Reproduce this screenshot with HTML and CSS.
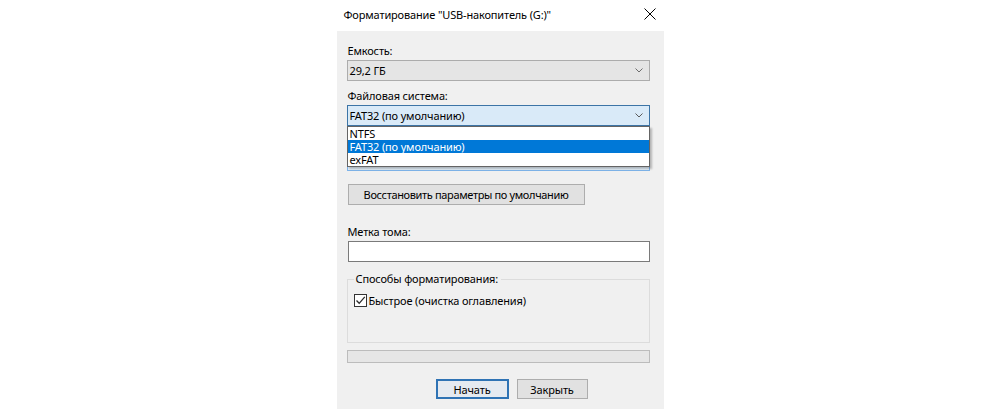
FILE: index.html
```html
<!DOCTYPE html>
<html lang="ru">
<head>
<meta charset="utf-8">
<title>Форматирование</title>
<link rel="stylesheet" href="styles.css">
</head>
<body>
<div class="dialog">
  <div class="titlebar">
    <span class="title">Форматирование "USB-накопитель (G:)"</span>
    <svg class="close" width="12" height="12" viewBox="0 0 12 12"><path d="M0.5 0.5 L11.5 11.5 M11.5 0.5 L0.5 11.5" stroke="#000" stroke-width="1" fill="none"/></svg>
  </div>
  <div class="content">
    <div class="field">
      <div class="label">Емкость:</div>
      <div class="combo combo-plain">
        <span>29,2 ГБ</span>
        <svg class="chev" width="8" height="5" viewBox="0 0 8 5"><path d="M0.5 0.5 L4 4 L7.5 0.5" stroke="#6d6d6d" stroke-width="1" fill="none"/></svg>
      </div>
    </div>
    <div class="field">
      <div class="label">Файловая система:</div>
      <div class="combo-wrap">
        <div class="combo combo-open">
          <span>FAT32 (по умолчанию)</span>
          <svg class="chev" width="8" height="5" viewBox="0 0 8 5"><path d="M0.5 0.5 L4 4 L7.5 0.5" stroke="#5a5a5a" stroke-width="1" fill="none"/></svg>
        </div>
        <ul class="dropdown">
          <li>NTFS</li>
          <li class="sel">FAT32 (по умолчанию)</li>
          <li>exFAT</li>
        </ul>
      </div>
    </div>
    <div class="field">
      <div class="label"></div>
      <div class="combo combo-under"></div>
    </div>
    <button class="btn btn-restore">Восстановить параметры по умолчанию</button>
    <div class="field field-vol">
      <div class="label">Метка тома:</div>
      <div class="textbox"></div>
    </div>
    <fieldset class="group">
      <legend>Способы форматирования:</legend>
      <div class="check-row">
        <span class="checkbox"><svg width="11" height="11" viewBox="0 0 11 11"><path d="M1.5 5.5 L4.2 8.3 L9.8 1.8" stroke="#2b2b2b" stroke-width="1.3" fill="none"/></svg></span>
        <span>Быстрое (очистка оглавления)</span>
      </div>
    </fieldset>
    <div class="progress"></div>
    <div class="actions">
      <button class="btn btn-default">Начать</button>
      <button class="btn btn-close">Закрыть</button>
    </div>
  </div>
</div>
</body>
</html>
```
FILE: styles.css
```css
html, body {
  margin: 0;
  padding: 0;
  background: #ffffff;
  height: 409px;
  overflow: hidden;
}
body {
  font-family: "Noto Sans", "Open Sans", sans-serif;
  font-size: 11px;
  letter-spacing: -0.15px;
  color: #000;
}
.dialog {
  width: 327px;
  margin: 0 auto;
  height: 409px;
  display: flex;
  flex-direction: column;
}
.titlebar {
  height: 31px;
  display: flex;
  align-items: center;
  justify-content: space-between;
  padding: 0 8px 2px 7px;
  box-sizing: border-box;
  background: #fff;
}
.title {
  font-size: 11px;
}
.close {
  margin-bottom: 2px;
}
.content {
  flex: 1;
  background: #f0f0f0;
  padding: 12px 14px 0 10px;
  display: flex;
  flex-direction: column;
  align-items: stretch;
}
.field {
  display: flex;
  flex-direction: column;
  margin-bottom: 7px;
}
.label {
  line-height: 16px;
  height: 16px;
  margin-bottom: 1px;
  padding-left: 1px;
}
.combo {
  height: 21px;
  box-sizing: border-box;
  display: flex;
  align-items: center;
  justify-content: space-between;
  padding: 0 5px 0 2px;
}
.combo-plain {
  background: #e5e5e5;
  border: 1px solid #acacac;
}
.combo-open {
  background: #d9eaf8;
  border: 1px solid #3c74a6;
}
.combo-under {
  border: 1px solid #7eb4ea;
  background: #e5f1fb;
}
.chev {
  margin-right: 1px;
}
.combo-wrap {
  position: relative;
}
.dropdown {
  position: absolute;
  left: 0;
  right: 0;
  top: 100%;
  margin: 0;
  padding: 0;
  list-style: none;
  background: #fff;
  border: 1px solid #646464;
  box-shadow: 2px 2px 2px rgba(0, 0, 0, 0.25);
  z-index: 5;
}
.dropdown li {
  height: 13px;
  line-height: 13px;
  padding-left: 2px;
}
.dropdown li.sel {
  background: #0078d7;
  color: #fff;
}
.btn {
  font-family: inherit;
  font-size: 11px;
  letter-spacing: inherit;
  color: #000;
  background: #e1e1e1;
  border: 1px solid #adadad;
  padding: 0;
  margin: 0;
  box-sizing: border-box;
}
.btn-restore {
  align-self: flex-start;
  width: 237px;
  height: 21px;
  margin: 6px 0 0 1px;
  letter-spacing: -0.35px;
}
.field-vol {
  margin-top: 19px;
  margin-bottom: 0;
}
.textbox {
  height: 21px;
  box-sizing: border-box;
  margin-left: 1px;
  background: #fff;
  border: 1px solid #7a7a7a;
}
.group {
  margin: 9px 0 0 0;
  padding: 0 6px;
  height: 72px;
  box-sizing: border-box;
  border: 1px solid #dcdcdc;
  min-width: 0;
}
.group legend {
  padding: 0 3px 0 2px;
  margin-left: 0;
  line-height: 16px;
}
.check-row {
  display: flex;
  align-items: center;
  gap: 2px;
  margin-top: 6px;
  height: 15px;
}
.checkbox {
  width: 13px;
  height: 13px;
  box-sizing: border-box;
  border: 1px solid #333;
  background: #fff;
  display: flex;
  align-items: center;
  justify-content: center;
}
.progress {
  margin-top: 7px;
  height: 13px;
  box-sizing: border-box;
  background: #e6e6e6;
  border: 1px solid #bcbcbc;
}
.actions {
  display: flex;
  gap: 8px;
  padding-left: 89px;
  margin-top: 16px;
}
.btn-default {
  width: 73px;
  height: 20px;
  border: 2px solid #2f73b4;
  background: #e5eaf0;
}
.btn-close {
  width: 71px;
  height: 20px;
}
```
